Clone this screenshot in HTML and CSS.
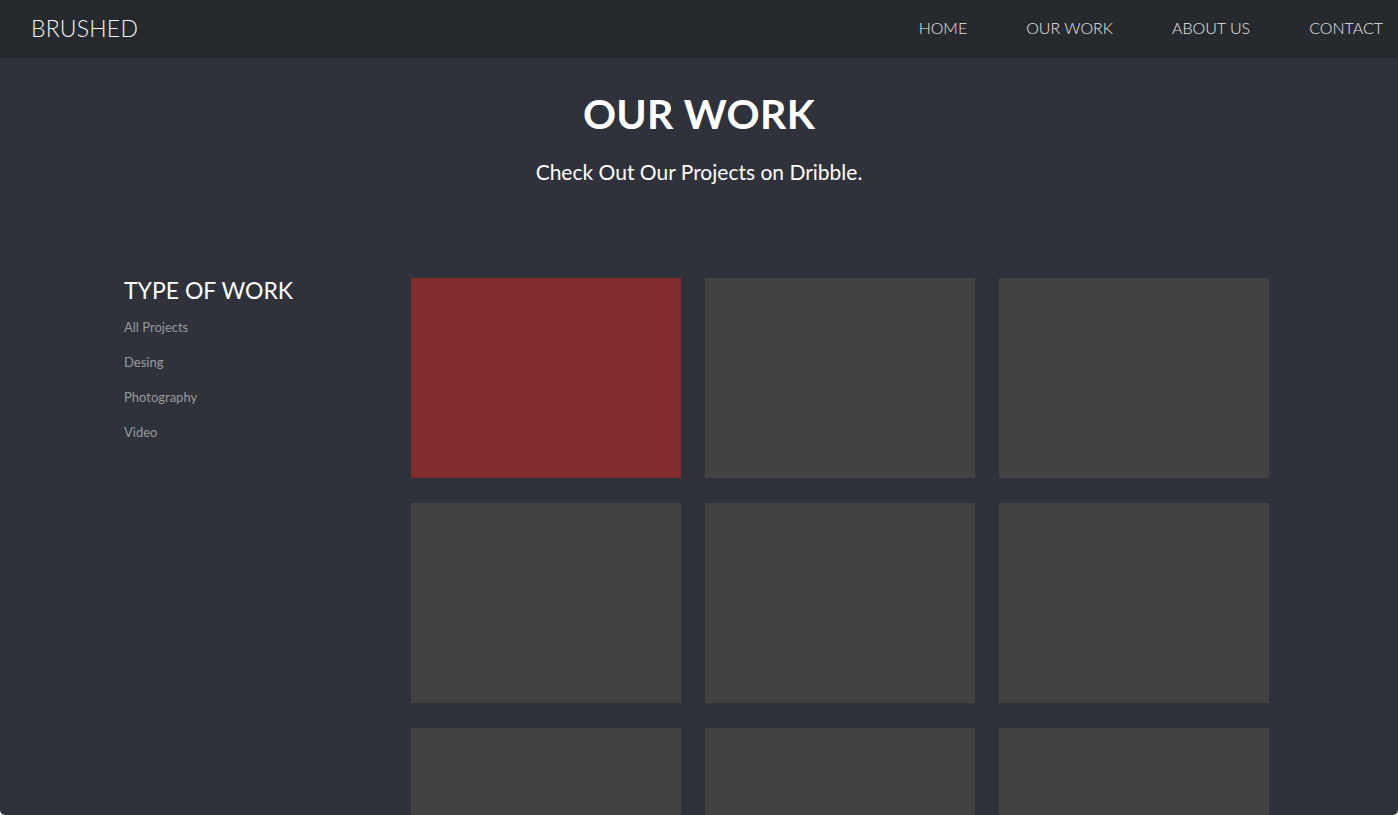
FILE: index.html
```html
<!DOCTYPE html>
<html lang="en">
<head>
<meta charset="utf-8">
<title>Brushed - Our Work</title>
<link rel="stylesheet" href="styles.css">
</head>
<body>
<div class="page">
  <header class="topbar">
    <div class="brand">BRUSHED</div>
    <nav class="nav">
      <a href="#">HOME</a>
      <a href="#">OUR WORK</a>
      <a href="#">ABOUT US</a>
      <a href="#">CONTACT</a>
    </nav>
  </header>
  <section class="intro">
    <h1>OUR WORK</h1>
    <p>Check Out Our Projects on Dribble.</p>
  </section>
  <section class="work">
    <aside class="filters">
      <h2>TYPE OF WORK</h2>
      <ul>
        <li><a href="#">All Projects</a></li>
        <li><a href="#">Desing</a></li>
        <li><a href="#">Photography</a></li>
        <li><a href="#">Video</a></li>
      </ul>
    </aside>
    <div class="grid">
      <div class="tile tile-accent"></div>
      <div class="tile"></div>
      <div class="tile"></div>
      <div class="tile"></div>
      <div class="tile"></div>
      <div class="tile"></div>
      <div class="tile"></div>
      <div class="tile"></div>
      <div class="tile"></div>
    </div>
  </section>
</div>
</body>
</html>
```
FILE: styles.css
```css
* { box-sizing: border-box; }
html, body {
  margin: 0;
  padding: 0;
  height: 100%;
  background: #ffffff;
  overflow: hidden;
}
body {
  font-family: Lato, "Open Sans", "Liberation Sans", sans-serif;
  color: #ffffff;
}
.page {
  height: 815px;
  background: #2f323a;
  border-radius: 0 0 5px 5px;
  overflow: hidden;
}
.topbar {
  height: 58px;
  background: #26292e;
  display: flex;
  align-items: center;
  justify-content: space-between;
  padding: 0 15px 3px 31px;
}
.brand {
  font-size: 23px;
  font-weight: 300;
  letter-spacing: 0.2px;
  color: #f4f4f4;
}
.nav {
  display: flex;
  gap: 59px;
}
.nav a {
  color: #e6e6e6;
  text-decoration: none;
  font-size: 16px;
  font-weight: 300;
}
.intro {
  text-align: center;
  padding-top: 28px;
}
.intro h1 {
  margin: 0;
  font-size: 41px;
  font-weight: 700;
  line-height: 56px;
  letter-spacing: 0.3px;
}
.intro p {
  margin: 16px 0 0;
  font-size: 21px;
  font-weight: 400;
  line-height: 28px;
}
.work {
  display: flex;
  padding: 92px 0 0 124px;
}
.filters {
  width: 287px;
}
.filters h2 {
  margin: 0;
  font-size: 23px;
  font-weight: 400;
  line-height: 24px;
  color: #ffffff;
}
.filters ul {
  list-style: none;
  margin: 17px 0 0;
  padding: 0;
  display: flex;
  flex-direction: column;
  gap: 19px;
}
.filters a {
  color: #9a9a9c;
  text-decoration: none;
  font-size: 13px;
  line-height: 16px;
  display: block;
}
.grid {
  display: grid;
  grid-template-columns: repeat(3, 270px);
  grid-auto-rows: 200px;
  column-gap: 24px;
  row-gap: 25px;
}
.tile {
  background: #424242;
}
.tile-accent {
  background: #822d2b;
}
```
